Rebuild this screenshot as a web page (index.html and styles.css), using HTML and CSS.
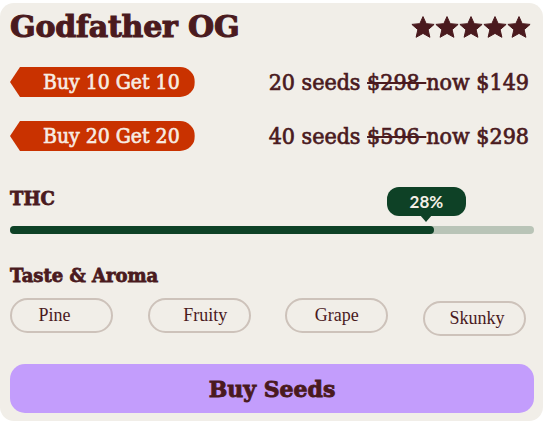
FILE: index.html
```html
<!DOCTYPE html>
<html lang="en">
<head>
    <meta charset="UTF-8">
    <meta name="viewport" content="width=device-width, initial-scale=1.0">
    <title>Godfather OG</title>
    <link rel="stylesheet" href="styles.css">
</head>
<body>
    <div class="strain-card">
        <div class="card-header">
            <h1 class="strain-name">Godfather OG</h1>
            <svg class="rating" viewBox="0 0 120 22" width="120" height="22" aria-label="5 stars">
                <defs>
                    <polygon id="star" points="12,0.6 15.18,7.63 23.1,8.4 17.14,13.67 18.9,21.3 12,17.4 5.1,21.3 6.86,13.67 0.9,8.4 8.82,7.63" />
                </defs>
                <use href="#star" x="0" />
                <use href="#star" x="24" />
                <use href="#star" x="48" />
                <use href="#star" x="72" />
                <use href="#star" x="96" />
            </svg>
        </div>

        <div class="offers">
            <div class="offer">
                <span class="offer-badge">Buy 10 Get 10</span>
                <span class="offer-price">20 seeds <s>$298 </s>now $149</span>
            </div>
            <div class="offer">
                <span class="offer-badge">Buy 20 Get 20</span>
                <span class="offer-price">40 seeds <s>$596 </s>now $298</span>
            </div>
        </div>

        <h2 class="section-title thc-title">THC</h2>
        <div class="meter">
            <div class="meter-fill" style="width: 80.9%">
                <span class="meter-bubble">28%</span>
            </div>
        </div>

        <h2 class="section-title taste-title">Taste &amp; Aroma</h2>
        <div class="tags">
            <span class="tag">Pine</span>
            <span class="tag">Fruity</span>
            <span class="tag">Grape</span>
            <span class="tag">Skunky</span>
        </div>

        <button class="buy-button">Buy Seeds</button>
    </div>
</body>
</html>
```

FILE: styles.css
```css
body {
    margin: 0;
    background: #ffffff;
    font-family: 'DejaVu Serif', serif;
    color: #4a1a1e;
}

.strain-card {
    box-sizing: border-box;
    width: 543px;
    height: 418px;
    margin-top: 3px;
    padding: 6px 9px 8px 10px;
    background: #f1eee8;
    border-radius: 14px;
    display: flex;
    flex-direction: column;
}

.card-header {
    display: flex;
    justify-content: space-between;
    align-items: center;
    height: 36px;
}

.strain-name {
    margin: 0;
    font-size: 30px;
    line-height: 36px;
    font-weight: bold;
    letter-spacing: -0.2px;
    -webkit-text-stroke: 1.1px #4a1a1e;
}

.rating {
    fill: #4a1a1e;
    stroke: #4a1a1e;
    stroke-width: 1;
    stroke-linejoin: round;
    margin: 0 3px 0 0;
}

.offers {
    display: flex;
    flex-direction: column;
    gap: 24px;
    margin-top: 22px;
}

.offer {
    display: flex;
    justify-content: space-between;
    align-items: center;
    padding-right: 5px;
}

.offer-badge {
    display: flex;
    align-items: center;
    height: 30px;
    padding: 0 15px 0 33px;
    background: #c93200;
    color: #f7ece3;
    font-family: 'DejaVu Serif Condensed', 'DejaVu Serif', serif;
    font-size: 21px;
    -webkit-text-stroke: 0.6px #f7ece3;
    border-radius: 0 15px 15px 0;
    clip-path: polygon(10px 0, 100% 0, 100% 100%, 10px 100%, 0 50%);
}

.offer-price {
    font-family: 'DejaVu Serif Condensed', 'DejaVu Serif', serif;
    font-size: 23px;
    -webkit-text-stroke: 0.7px #4a1a1e;
}

.offer-price s {
    text-decoration-thickness: 2px;
}

.section-title {
    margin: 0;
    font-size: 18px;
    line-height: 22px;
    font-weight: bold;
    -webkit-text-stroke: 0.8px #4a1a1e;
}

.thc-title {
    margin-top: 37px;
}

.meter {
    margin-top: 16px;
    height: 8px;
    background: #b9c4b7;
    border-radius: 4px;
}

.meter-fill {
    position: relative;
    height: 100%;
    background: #0e4126;
    border-radius: 4px;
}

.meter-bubble {
    position: absolute;
    right: -32px;
    bottom: 18px;
    width: 79px;
    height: 29px;
    line-height: 29px;
    text-align: center;
    background: #0e4126;
    color: #f4efe6;
    font-family: 'Lato', sans-serif;
    font-weight: bold;
    font-size: 17px;
    border-radius: 12px;
}

.meter-bubble::after {
    content: '';
    position: absolute;
    left: 50%;
    bottom: -6px;
    margin-left: -6px;
    border-left: 6px solid transparent;
    border-right: 6px solid transparent;
    border-top: 7px solid #0e4126;
}

.taste-title {
    margin-top: 31px;
}

.tags {
    display: flex;
    justify-content: space-between;
    align-items: flex-start;
    margin-top: 11px;
    padding-right: 8px;
}

.tag {
    box-sizing: border-box;
    width: 103px;
    height: 35px;
    border: 2px solid #cdc2ba;
    border-radius: 18px;
    display: flex;
    align-items: center;
    justify-content: center;
    font-family: 'Liberation Serif', serif;
    font-size: 18px;
}

.tag:nth-child(1) {
    padding-right: 14px;
}

.tag:nth-child(2) {
    padding-left: 12px;
}

.tag:nth-child(4) {
    margin-top: 3px;
    padding-left: 5px;
}

.buy-button {
    margin-top: auto;
    height: 49px;
    border: none;
    border-radius: 15px;
    background: #c39dfc;
    color: #4a1a1e;
    font-family: 'DejaVu Serif', serif;
    font-weight: bold;
    font-size: 22px;
    -webkit-text-stroke: 0.9px #4a1a1e;
}
```
